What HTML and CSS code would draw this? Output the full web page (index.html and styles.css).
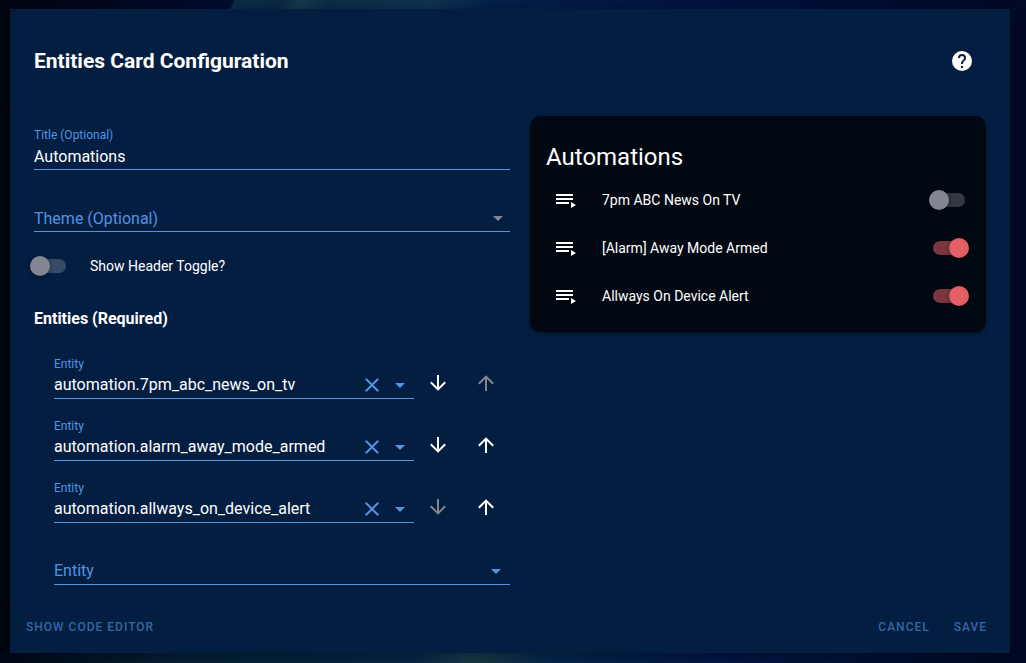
FILE: index.html
```html
<!DOCTYPE html>
<html lang="en">
<head>
  <meta charset="utf-8">
  <meta name="viewport" content="width=device-width, initial-scale=1">
  <title>Entities Card Configuration</title>
  <link rel="stylesheet" href="styles.css">
</head>
<body>
  <!-- shared icons -->
  <svg class="sprite" aria-hidden="true">
    <symbol id="help" viewBox="0 0 24 24"><path d="M15.07 11.25l-.9.92C13.45 12.89 13 13.5 13 15h-2v-.5c0-1.11.45-2.11 1.17-2.83l1.24-1.26c.37-.36.59-.86.59-1.41a2 2 0 0 0-4 0H8a4 4 0 0 1 8 0c0 .88-.36 1.67-.93 2.25M13 19h-2v-2h2M12 2a10 10 0 1 0 0 20 10 10 0 0 0 0-20z"/></symbol>
    <symbol id="close" viewBox="0 0 24 24"><path d="M19 6.41L17.59 5 12 10.59 6.41 5 5 6.41 10.59 12 5 17.59 6.41 19 12 13.41 17.59 19 19 17.59 13.41 12z"/></symbol>
    <symbol id="caret" viewBox="0 0 24 24"><path d="M7 10l5 5 5-5z"/></symbol>
    <symbol id="down" viewBox="0 0 24 24"><path d="M11 4h2v12l5.5-5.5 1.42 1.42L12 19.84l-7.92-7.92L5.5 10.5 11 16z"/></symbol>
    <symbol id="up" viewBox="0 0 24 24"><path d="M13 20h-2V8l-5.5 5.5-1.42-1.42L12 4.16l7.92 7.92-1.42 1.42L13 8z"/></symbol>
    <symbol id="playlist" viewBox="0 0 24 24"><path d="M2 6h17v2H2zM2 10h17v2H2zM2 14h13v2H2zM17 14v6l5-3z"/></symbol>
  </svg>

  <main class="dialog">
    <header class="dialog-header">
      <h1>Entities Card Configuration</h1>
      <button class="icon-button" type="button" aria-label="Help"><svg class="icon"><use href="#help"/></svg></button>
    </header>

    <div class="dialog-content">
      <form class="editor">
        <div class="field">
          <label for="title">Title (Optional)</label>
          <div class="field-row">
            <input type="text" id="title" value="Automations">
          </div>
        </div>
        <div class="field unlabelled">
          <div class="field-row">
            <select id="theme" aria-label="Theme (Optional)">
              <option>Theme (Optional)</option>
            </select>
            <svg class="icon muted"><use href="#caret"/></svg>
          </div>
        </div>
        <div class="toggle-row">
          <input class="switch" type="checkbox" id="header-toggle">
          <label for="header-toggle">Show Header Toggle?</label>
        </div>

        <h3>Entities (Required)</h3>
        <div class="entities">
          <div class="entity">
            <div class="field">
              <label for="entity1">Entity</label>
              <div class="field-row">
                <input type="text" id="entity1" value="automation.7pm_abc_news_on_tv">
                <button class="field-button" type="button" aria-label="Clear"><svg class="icon"><use href="#close"/></svg></button>
                <button class="field-button" type="button" aria-label="Open list"><svg class="icon"><use href="#caret"/></svg></button>
              </div>
            </div>
            <button class="icon-button" type="button" aria-label="Move down"><svg class="icon"><use href="#down"/></svg></button>
            <button class="icon-button" type="button" aria-label="Move up" disabled><svg class="icon"><use href="#up"/></svg></button>
          </div>
          <div class="entity">
            <div class="field">
              <label for="entity2">Entity</label>
              <div class="field-row">
                <input type="text" id="entity2" value="automation.alarm_away_mode_armed">
                <button class="field-button" type="button" aria-label="Clear"><svg class="icon"><use href="#close"/></svg></button>
                <button class="field-button" type="button" aria-label="Open list"><svg class="icon"><use href="#caret"/></svg></button>
              </div>
            </div>
            <button class="icon-button" type="button" aria-label="Move down"><svg class="icon"><use href="#down"/></svg></button>
            <button class="icon-button" type="button" aria-label="Move up"><svg class="icon"><use href="#up"/></svg></button>
          </div>
          <div class="entity">
            <div class="field">
              <label for="entity3">Entity</label>
              <div class="field-row">
                <input type="text" id="entity3" value="automation.allways_on_device_alert">
                <button class="field-button" type="button" aria-label="Clear"><svg class="icon"><use href="#close"/></svg></button>
                <button class="field-button" type="button" aria-label="Open list"><svg class="icon"><use href="#caret"/></svg></button>
              </div>
            </div>
            <button class="icon-button" type="button" aria-label="Move down" disabled><svg class="icon"><use href="#down"/></svg></button>
            <button class="icon-button" type="button" aria-label="Move up"><svg class="icon"><use href="#up"/></svg></button>
          </div>
          <div class="field unlabelled">
            <div class="field-row">
              <input type="text" id="entity-new" placeholder="Entity" aria-label="Entity">
              <button class="field-button" type="button" aria-label="Open list"><svg class="icon"><use href="#caret"/></svg></button>
            </div>
          </div>
        </div>
      </form>

      <section class="card">
        <h2>Automations</h2>
        <ul>
          <li>
            <svg class="icon"><use href="#playlist"/></svg>
            <label for="auto1">7pm ABC News On TV</label>
            <input class="switch" type="checkbox" id="auto1">
          </li>
          <li>
            <svg class="icon"><use href="#playlist"/></svg>
            <label for="auto2">[Alarm] Away Mode Armed</label>
            <input class="switch" type="checkbox" id="auto2" checked>
          </li>
          <li>
            <svg class="icon"><use href="#playlist"/></svg>
            <label for="auto3">Allways On Device Alert</label>
            <input class="switch" type="checkbox" id="auto3" checked>
          </li>
        </ul>
      </section>
    </div>

    <footer class="dialog-actions">
      <button class="text-button code-editor" type="button">Show code editor</button>
      <button class="text-button" type="button">Cancel</button>
      <button class="text-button" type="button">Save</button>
    </footer>
  </main>
</body>
</html>
```
FILE: styles.css
```css
:root {
  --dialog: #041e42;
  --card: #010812;
  --accent: #5294e2;
  --action: #3566a6;
  --muted: #828690;
  --on: #e45e65;
}

* {
  box-sizing: border-box;
}

body {
  margin: 0;
  min-height: 100vh;
  display: flex;
  flex-direction: column;
  padding: 9px 16px 10px 10px;
  font-family: Roboto, sans-serif;
  font-size: 14px;
  line-height: 20px;
  color: #fff;
  background:
    linear-gradient(115deg, transparent 212px, #0c2e48 213px, #0a2845 255px, #163a4c 272px, #0c2c48 300px, #0e3350 390px, #04204a 450px, transparent 620px) top / 100% 9px no-repeat,
    linear-gradient(90deg, #010718, #052338 18%, #06284a 40%, #1a3c48 46%, #052850 54%, #021848 70%, #010a24) bottom / 100% 10px no-repeat,
    linear-gradient(90deg, #010510, #010c30 22%, #021344 65%, #010a26);
}

h1, h2, h3, ul {
  margin: 0;
  padding: 0;
}

button, input, select {
  margin: 0;
  padding: 0;
  border: none;
  background: none;
  color: inherit;
  font: inherit;
}

.sprite {
  display: none;
}

.icon {
  width: 24px;
  height: 24px;
  flex: none;
  fill: currentColor;
}

.muted {
  color: var(--muted);
}

.dialog {
  flex: 1;
  display: flex;
  flex-direction: column;
  background: var(--dialog);
  box-shadow: 0 4px 16px rgba(0, 0, 0, .4);
}

.dialog-header {
  display: flex;
  align-items: center;
  justify-content: space-between;
  padding: 28px 24px 23px;
}

h1 {
  font-size: 21px;
  line-height: 32px;
  font-weight: 700;
}

.icon-button {
  display: flex;
  align-items: center;
  justify-content: center;
  width: 48px;
  height: 48px;
  flex: none;
}

.icon-button:disabled {
  color: var(--muted);
}

.dialog-content {
  flex: 1;
  display: grid;
  grid-template-columns: 119fr 114fr;
  align-items: start;
  gap: 20px;
  padding: 7px 24px;
  border-top: 1px solid #031936;
  border-bottom: 1px solid #031936;
}

/* Text fields */
.field {
  flex: 1;
  min-width: 0;
  padding: 8px 0;
}

.field.unlabelled {
  padding-top: 28px;
}

.field label {
  display: block;
  height: 20px;
  font-size: 12px;
  line-height: 22px;
  color: var(--accent);
}

.field-row {
  display: flex;
  align-items: flex-start;
  height: 26px;
  border-bottom: 1px solid var(--accent);
}

.field input,
.field select {
  flex: 1;
  min-width: 0;
  height: 25px;
  font-size: 16px;
  line-height: 24px;
  outline: none;
}

.entities .field input {
  height: 24px;
}

.field select {
  appearance: none;
  color: var(--accent);
}

.field input::placeholder {
  color: var(--accent);
  opacity: 1;
}

.field-button {
  display: flex;
  align-items: center;
  justify-content: center;
  width: 28px;
  height: 24px;
  color: var(--accent);
}

.toggle-row {
  display: flex;
  align-items: center;
  gap: 20px;
  height: 52px;
  margin-left: -4px;
}

/* Switches: track and thumb share one grid cell */
.switch {
  appearance: none;
  display: grid;
  align-items: center;
  width: 40px;
  height: 20px;
  flex: none;
}

.switch::before,
.switch::after {
  content: "";
  grid-area: 1 / 1;
}

.switch::before {
  justify-self: center;
  width: 32px;
  height: 14px;
  border-radius: 7px;
  background: rgba(255, 255, 255, .2);
}

.switch::after {
  width: 20px;
  height: 20px;
  border-radius: 50%;
  background: var(--muted);
  box-shadow: 0 1px 4px rgba(0, 0, 0, .5);
}

.switch:checked::before {
  background: rgba(228, 94, 101, .54);
}

.switch:checked::after {
  justify-self: end;
  background: var(--on);
}

h3 {
  padding: 15px 0 14px;
  font-size: 16px;
  line-height: 24px;
  font-weight: 700;
}

.entities {
  padding-left: 20px;
}

.entity {
  display: flex;
  align-items: flex-end;
}

/* Preview card */
.card {
  padding: 16px;
  border-radius: 10px;
  background: var(--card);
  box-shadow: 0 2px 4px rgba(0, 0, 0, .4);
}

h2 {
  padding: 9px 0 7px;
  font-size: 24px;
  line-height: 32px;
  font-weight: 400;
}

ul {
  display: grid;
  gap: 8px;
  list-style: none;
}

li {
  display: flex;
  align-items: center;
  height: 40px;
  padding: 0 1px 0 8px;
}

li label {
  flex: 1;
  padding-left: 24px;
}

.dialog-actions {
  display: flex;
  align-items: center;
  gap: 8px;
  padding: 8px 15px 8px 8px;
}

.text-button {
  height: 36px;
  padding: 0 8px;
  font-size: 12px;
  font-weight: 500;
  letter-spacing: 1px;
  text-transform: uppercase;
  color: var(--action);
}

.code-editor {
  margin-right: auto;
}
```
